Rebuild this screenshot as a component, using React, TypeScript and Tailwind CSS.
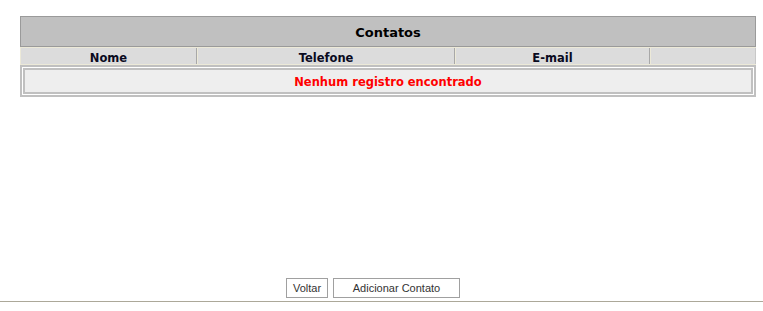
export default function App() {
  const cols = [
    { label: "Nome", w: "w-[177px]" },
    { label: "Telefone", w: "w-[258px]" },
    { label: "E-mail", w: "w-[195px]" },
    { label: "", w: "flex-1" },
  ]

  return (
    <div className="flex h-[311px] w-full flex-col bg-white" style={{ fontFamily: "'DejaVu Sans', Verdana, sans-serif" }}>
      <div className="ml-[20px] mt-[16px] w-[736px]">
        <div className="flex h-[31px] items-center justify-center border border-[#9a9a9a] bg-[#c0c0c0] pt-[2px] text-[13px] font-bold text-black">
          Contatos
        </div>
        <div className="flex h-[18px] border-y border-[#ece9d8] bg-[#dcdcdc]">
          {cols.map((c, i) => (
            <div
              key={i}
              className={`${c.w} flex items-center justify-center border-l border-r border-l-[#ece9d8] border-r-[#a8a8a8] pt-[6px] text-[11.5px] font-bold leading-none text-[#0a0a1e] last:border-r-[#c8c8c8]`}
            >
              {c.label}
            </div>
          ))}
        </div>
        <div className="h-[32px] border-2 border-[#c0c0c0] bg-white p-px">
          <div className="flex h-full items-center justify-center border-2 border-[#c0c0c0] bg-[#eeeeee] pt-[4px] text-[11.5px] font-bold leading-none text-[#ff0000]">
            Nenhum registro encontrado
          </div>
        </div>
      </div>
      <div className="ml-[286px] mt-auto flex gap-[5px]" style={{ fontFamily: "'Liberation Sans', Arial, sans-serif" }}>
        <button className="h-[20px] w-[42px] border border-[#a0a0a0] bg-white text-[11px] text-[#333]">Voltar</button>
        <button className="h-[20px] w-[127px] border border-[#a0a0a0] bg-white text-[11px] text-[#333]">Adicionar Contato</button>
      </div>
      <div className="mb-[9px] mt-[3px] h-px w-full bg-[#aca899]" />
    </div>
  )
}
